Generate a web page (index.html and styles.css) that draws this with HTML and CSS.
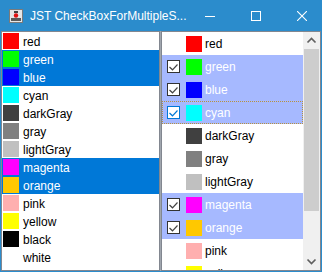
FILE: index.html
```html
<!DOCTYPE html>
<html lang="en">
<head>
    <meta charset="UTF-8">
    <meta name="viewport" content="width=device-width, initial-scale=1.0">
    <title>JST CheckBoxForMultipleSelection</title>
    <link rel="stylesheet" href="styles.css">
</head>
<body>
    <div class="window">
        <div class="titlebar">
            <svg class="app-icon" viewBox="0 0 16 16">
                <rect x="1.5" y="1.5" width="13" height="13" fill="#e6e6e6" stroke="#7a7a7a"/>
                <path d="M3 10h10v3H3z" fill="#5a5a5a"/>
                <path d="M6 3h4v2H6z" fill="#444"/>
                <circle cx="8" cy="7.5" r="2.2" fill="#e01010"/>
            </svg>
            <span class="title">JST CheckBoxForMultipleS...</span>
            <div class="controls">
                <span class="ctl"><svg viewBox="0 0 10 10"><path d="M0 5.5h10" stroke="#fff"/></svg></span>
                <span class="ctl"><svg viewBox="0 0 10 10"><rect x="0.5" y="0.5" width="9" height="9" fill="none" stroke="#fff"/></svg></span>
                <span class="ctl"><svg viewBox="0 0 10 10"><path d="M0 0L10 10M10 0L0 10" stroke="#fff" stroke-width="1.1"/></svg></span>
            </div>
        </div>
        <div class="panes">
            <div class="pane left">
                <ul class="list">
                    <li class="row"><span class="swatch c-red"></span><span class="label">red</span></li>
                    <li class="row sel"><span class="swatch c-green"></span><span class="label">green</span></li>
                    <li class="row sel"><span class="swatch c-blue"></span><span class="label">blue</span></li>
                    <li class="row"><span class="swatch c-cyan"></span><span class="label">cyan</span></li>
                    <li class="row"><span class="swatch c-darkgray"></span><span class="label">darkGray</span></li>
                    <li class="row"><span class="swatch c-gray"></span><span class="label">gray</span></li>
                    <li class="row"><span class="swatch c-lightgray"></span><span class="label">lightGray</span></li>
                    <li class="row sel"><span class="swatch c-magenta"></span><span class="label">magenta</span></li>
                    <li class="row sel"><span class="swatch c-orange"></span><span class="label">orange</span></li>
                    <li class="row"><span class="swatch c-pink"></span><span class="label">pink</span></li>
                    <li class="row"><span class="swatch c-yellow"></span><span class="label">yellow</span></li>
                    <li class="row"><span class="swatch c-black"></span><span class="label">black</span></li>
                    <li class="row"><span class="swatch c-white"></span><span class="label">white</span></li>
                </ul>
            </div>
            <div class="splitter"></div>
            <div class="pane right">
                <ul class="checklist">
                    <li class="crow"><svg class="check" viewBox="0 0 13 13"></svg><span class="swatch c-red"></span><span class="label">red</span></li>
                    <li class="crow sel"><svg class="check on" viewBox="0 0 13 13"><rect x="0.5" y="0.5" width="12" height="12" fill="#fff" stroke="#333"/><polyline points="2.5,7 5.5,9.8 10.5,4.5" fill="none" stroke="#444" stroke-width="1.2"/></svg><span class="swatch c-green"></span><span class="label">green</span></li>
                    <li class="crow sel"><svg class="check on" viewBox="0 0 13 13"><rect x="0.5" y="0.5" width="12" height="12" fill="#fff" stroke="#333"/><polyline points="2.5,7 5.5,9.8 10.5,4.5" fill="none" stroke="#444" stroke-width="1.2"/></svg><span class="swatch c-blue"></span><span class="label">blue</span></li>
                    <li class="crow sel focus"><svg class="check on" viewBox="0 0 13 13"><rect x="0.5" y="0.5" width="12" height="12" fill="#fff" stroke="#0078d7"/><polyline points="2.5,7 5.5,9.8 10.5,4.5" fill="none" stroke="#0078d7" stroke-width="1.2"/></svg><span class="swatch c-cyan"></span><span class="label">cyan</span></li>
                    <li class="crow"><svg class="check" viewBox="0 0 13 13"></svg><span class="swatch c-darkgray"></span><span class="label">darkGray</span></li>
                    <li class="crow"><svg class="check" viewBox="0 0 13 13"></svg><span class="swatch c-gray"></span><span class="label">gray</span></li>
                    <li class="crow"><svg class="check" viewBox="0 0 13 13"></svg><span class="swatch c-lightgray"></span><span class="label">lightGray</span></li>
                    <li class="crow sel"><svg class="check on" viewBox="0 0 13 13"><rect x="0.5" y="0.5" width="12" height="12" fill="#fff" stroke="#333"/><polyline points="2.5,7 5.5,9.8 10.5,4.5" fill="none" stroke="#444" stroke-width="1.2"/></svg><span class="swatch c-magenta"></span><span class="label">magenta</span></li>
                    <li class="crow sel"><svg class="check on" viewBox="0 0 13 13"><rect x="0.5" y="0.5" width="12" height="12" fill="#fff" stroke="#333"/><polyline points="2.5,7 5.5,9.8 10.5,4.5" fill="none" stroke="#444" stroke-width="1.2"/></svg><span class="swatch c-orange"></span><span class="label">orange</span></li>
                    <li class="crow"><svg class="check" viewBox="0 0 13 13"></svg><span class="swatch c-pink"></span><span class="label">pink</span></li>
                    <li class="crow"><svg class="check" viewBox="0 0 13 13"></svg><span class="swatch c-yellow"></span><span class="label">yellow</span></li>
                </ul>
                <div class="scrollbar">
                    <div class="sb-btn"><svg viewBox="0 0 17 17"><polyline points="4.5,10.5 8.5,6.5 12.5,10.5" fill="none" stroke="#606060" stroke-width="1.7"/></svg></div>
                    <div class="sb-track"><div class="sb-thumb"></div></div>
                    <div class="sb-btn"><svg viewBox="0 0 17 17"><polyline points="4.5,6.5 8.5,10.5 12.5,6.5" fill="none" stroke="#606060" stroke-width="1.7"/></svg></div>
                </div>
            </div>
        </div>
    </div>
</body>
</html>
```

FILE: styles.css
```css
body {
    margin: 0;
    padding: 0;
}
.window {
    width: 322px;
    height: 272px;
    background-color: #2b8ccc;
    font-family: "Liberation Sans", Arial, sans-serif;
    display: flex;
    flex-direction: column;
}
.titlebar {
    height: 31px;
    display: flex;
    align-items: center;
    padding-left: 8px;
    color: white;
    font-size: 12px;
    flex: none;
}
.app-icon {
    width: 16px;
    height: 16px;
    flex: none;
}
.title {
    flex: 1;
    margin-left: 6px;
    white-space: nowrap;
}
.controls {
    display: flex;
    height: 100%;
}
.ctl {
    width: 46px;
    display: flex;
    align-items: center;
    justify-content: center;
}
.ctl svg {
    width: 10px;
    height: 10px;
}
.panes {
    display: flex;
    height: 240px;
    margin: 0 1px;
}
.pane {
    border: 1px solid #828790;
    overflow: hidden;
    background-color: white;
}
.left {
    width: 157px;
}
.splitter {
    width: 1px;
    background-color: #a0a6ae;
}
.right {
    width: 158px;
    display: flex;
}
.list, .checklist {
    list-style: none;
    margin: 0;
    padding: 0;
}
.swatch {
    width: 16px;
    height: 16px;
    flex: none;
}
.row {
    height: 18px;
    display: flex;
    align-items: center;
    font-size: 12px;
}
.row .swatch {
    margin: 0 4px 0 1px;
}
.row .label {
    padding-top: 2px;
}
.row.sel {
    background-color: #0078d7;
    color: white;
}
.checklist {
    width: 141px;
    flex: none;
}
.crow {
    height: 23px;
    display: flex;
    align-items: center;
    padding-left: 5px;
    font-size: 12px;
}
.crow .label {
    padding-top: 1px;
}
.check {
    width: 13px;
    height: 13px;
    margin-right: 6px;
    flex: none;
}
.crow .swatch {
    margin-right: 3px;
}
.crow.sel {
    background-color: #a6b9ff;
    color: white;
}
.crow.focus {
    outline: 1px dotted #b8913f;
    outline-offset: -1px;
}
.scrollbar {
    width: 17px;
    background-color: #f0f0f0;
    display: flex;
    flex-direction: column;
}
.sb-btn {
    height: 17px;
}
.sb-btn svg {
    width: 17px;
    height: 17px;
    display: block;
}
.sb-track {
    flex: 1;
    padding: 0 1px;
}
.sb-thumb {
    height: 162px;
    background-color: #cdcdcd;
}
.c-red { background-color: #ff0000; }
.c-green { background-color: #00ff00; }
.c-blue { background-color: #0000ff; }
.c-cyan { background-color: #00ffff; }
.c-darkgray { background-color: #404040; }
.c-gray { background-color: #808080; }
.c-lightgray { background-color: #c0c0c0; }
.c-magenta { background-color: #ff00ff; }
.c-orange { background-color: #ffc800; }
.c-pink { background-color: #ffafaf; }
.c-yellow { background-color: #ffff00; }
.c-black { background-color: #000000; }
.c-white { background-color: #ffffff; }
```
